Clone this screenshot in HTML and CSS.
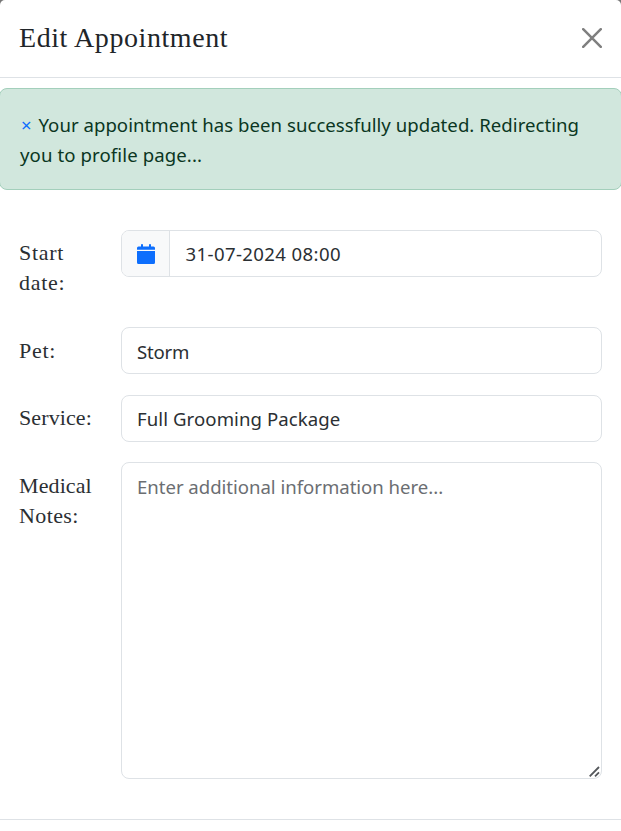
FILE: index.html
```html
<!DOCTYPE html>
<html lang="en">
<head>
<meta charset="utf-8">
<title>Edit Appointment</title>
<link rel="stylesheet" href="styles.css">
</head>
<body>
<div class="modal">
  <header class="modal-header">
    <h1 class="modal-title"><span>Edit Appointment</span></h1>
    <button class="close" aria-label="Close">
      <svg viewBox="0 0 20 20" width="20" height="20"><path d="M1.2 1.2 18.8 18.8M18.8 1.2 1.2 18.8" fill="none" stroke="#7f7f7f" stroke-width="2.5" stroke-linecap="round"/></svg>
    </button>
  </header>
  <div class="alert" role="alert">
    <a class="dismiss">×</a> <span class="line-one">Your appointment has been successfully updated. Redirecting</span><br><span class="line-two">you to profile page...</span>
  </div>
  <form class="form">
    <div class="row">
      <label class="label"><span class="l-start">Start</span><br><span class="l-date">date:</span></label>
      <div class="field group">
        <span class="addon">
          <svg viewBox="0 0 18 20" width="18" height="20" fill="#0d6efd"><path d="M0 5.8V4Q0 2.5 1.5 2.5H4V.8Q4 0 5 0T6 .8V2.5H12V.8Q12 0 13 0T14 .8V2.5H16.5Q18 2.5 18 4V5.8ZM0 7H18V18.5Q18 20 16.5 20H1.5Q0 20 0 18.5Z"/></svg>
        </span>
        <span class="value date"><span class="v-date">31-07-2024 08:00</span></span>
      </div>
    </div>
    <div class="row">
      <label class="label low"><span class="l-pet">Pet:</span></label>
      <div class="field value"><span class="v-pet">Storm</span></div>
    </div>
    <div class="row">
      <label class="label"><span class="l-service">Service:</span></label>
      <div class="field value"><span class="v-service">Full Grooming Package</span></div>
    </div>
    <div class="row">
      <label class="label low"><span class="l-medical">Medical</span><br><span class="l-notes">Notes:</span></label>
      <div class="field value notes"><span class="v-notes">Enter additional information here...</span>
        <svg class="grip" viewBox="0 0 11 11" width="11" height="11"><path d="M.7 10.3 10 1M6 10.3 10 6.3" fill="none" stroke="#55585c" stroke-width="1.8"/></svg>
      </div>
    </div>
  </form>
  <footer class="modal-footer"></footer>
</div>
</body>
</html>
```
FILE: styles.css
```css
* { box-sizing: border-box; }
body {
  margin: 0;
  height: 831px;
  overflow: hidden;
  background: #777;
  color: #2b2f33;
  font: 400 18.6px/30px "Noto Sans", sans-serif;
}
.modal {
  height: 831px;
  background: #fff;
  border-radius: 5px 5px 0 0;
}
.modal-header {
  display: flex;
  align-items: center;
  justify-content: space-between;
  height: 78px;
  padding: 0 19px 2px;
  border-bottom: 1px solid #dee2e6;
}
.modal-title {
  margin: 0;
  color: #212529;
  font: 400 28px/38px "Liberation Serif", serif;
  letter-spacing: 0.58px;
}
.close {
  display: flex;
  padding: 0;
  border: 0;
  background: none;
}
.alert {
  height: 102px;
  margin: 10px -1px 0;
  padding: 21px 20px 19px;
  border: 1px solid #a3cfbb;
  border-radius: 8px;
  background: #d1e7dd;
  color: #0a3622;
  white-space: nowrap;
}
.dismiss {
  margin: 0 2px 0 1px;
  color: #0d6efd;
}
.line-one { letter-spacing: 0.03px; }
.line-two { letter-spacing: 0.1px; }
.form {
  display: grid;
  gap: 20px;
  padding: 39.8px 19px 40px;
}
.row {
  display: grid;
  grid-template-columns: 102px 1fr;
  align-items: start;
}
.label {
  padding: 8px 0 9.5px;
  font: 22px/30px "Liberation Serif", serif;
  letter-spacing: 0.1px;
  white-space: nowrap;
}
.low { padding: 9px 0 8.5px; }
.l-start, .l-date, .l-pet { letter-spacing: 0.7px; }
.l-notes { letter-spacing: 0.4px; }
.field {
  height: 47px;
  border: 1px solid #dee2e6;
  border-radius: 8px;
}
.value {
  padding: 8.5px 15px;
  white-space: nowrap;
}
.date {
  padding: 8px 15.5px;
  letter-spacing: 0.38px;
}
.v-pet { letter-spacing: -0.2px; }
.v-service { letter-spacing: 0.08px; }
.v-notes { letter-spacing: -0.03px; }
.group { display: flex; }
.addon {
  display: flex;
  align-items: center;
  justify-content: center;
  width: 48px;
  padding-top: 1px;
  border-right: 1px solid #dee2e6;
  border-radius: 7px 0 0 7px;
  background: #f8f9fa;
}
.notes {
  position: relative;
  height: 317px;
  color: #6b6e72;
}
.grip {
  position: absolute;
  right: 1px;
  bottom: 1px;
}
.modal-footer { border-top: 1px solid #dee2e6; }
```
